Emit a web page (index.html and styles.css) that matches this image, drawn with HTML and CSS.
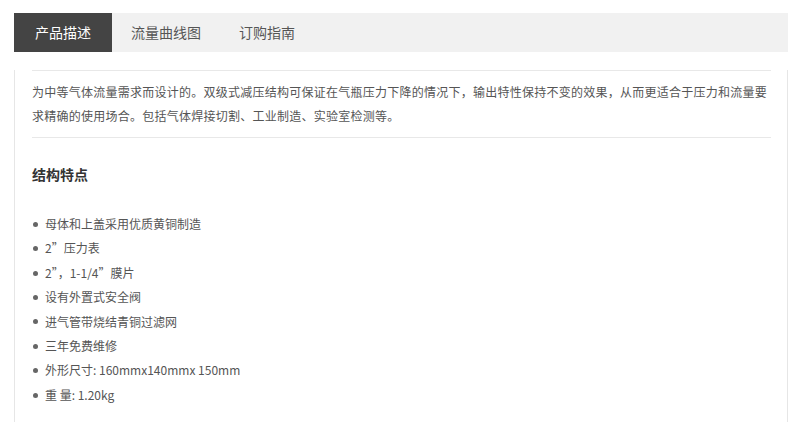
FILE: index.html
```html
<!DOCTYPE html>
<html lang="zh-CN">
<head>
    <meta charset="UTF-8">
    <title>产品描述</title>
    <meta name="viewport" content="width=device-width, initial-scale=1">
    <link rel="stylesheet" href="styles.css">
</head>
<body>
    <div class="product-tabs">
        <ul class="tab-nav">
            <li class="tab active">产品描述</li>
            <li class="tab">流量曲线图</li>
            <li class="tab">订购指南</li>
        </ul>
        <div class="tab-body">
            <p class="intro">为中等气体流量需求而设计的。双级式减压结构可保证在气瓶压力下降的情况下，输出特性保持不变的效果，从而更适合于压力和流量要求精确的使用场合。包括气体焊接切割、工业制造、实验室检测等。</p>
            <h3 class="section-title">结构特点</h3>
            <ul class="features">
                <li>母体和上盖采用优质黄铜制造</li>
                <li>2”压力表</li>
                <li>2”，1-1/4”膜片</li>
                <li>设有外置式安全阀</li>
                <li>进气管带烧结青铜过滤网</li>
                <li>三年免费维修</li>
                <li>外形尺寸: 160mmx140mmx 150mm</li>
                <li>重 量: 1.20kg</li>
            </ul>
        </div>
    </div>
</body>
</html>
```

FILE: styles.css
```css
body { font-family: "Noto Sans CJK SC", "Noto Sans", sans-serif; background: #fff; margin: 0; padding: 13px 12px 0 14px; color: #555; overflow: hidden; }
.product-tabs { width: 774px; }
.tab-nav { display: flex; list-style: none; margin: 0; padding: 0; background: #f1f1f1; height: 39px; }
.tab { padding: 0 19px; font-size: 14px; line-height: 39px; color: #555; cursor: pointer; }
.tab.active { background: #444; color: #fff; padding: 0 21px; }
.tab-body { box-sizing: border-box; border: 1px solid #e6e6e6; border-top: none; padding: 0 16px 0 17px; height: 370px; }
.intro {
    margin: 18px 0 0; padding: 9px 0; font-size: 12px; line-height: 24px; letter-spacing: 0.25px;
    border-top: 1px solid #e8e8e8; border-bottom: 1px solid #e8e8e8;
}
.section-title { margin: 24px 0 0; font-size: 14px; line-height: 24px; color: #333; font-weight: bold; }
.features { list-style: none; margin: 26px 0 0; padding: 0; font-size: 12px; line-height: 24.4px; }
.features li { display: flex; align-items: center; }
.features li::before {
    content: ""; width: 5px; height: 5px; border-radius: 50%; background: #666; margin: 0 7px 0 1px; flex-shrink: 0;
}
```
